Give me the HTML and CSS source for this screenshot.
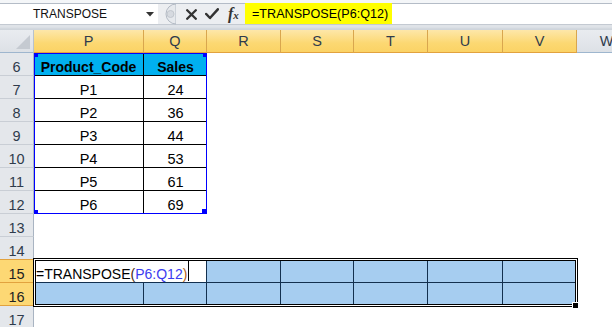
FILE: index.html
```html
<!DOCTYPE html>
<html>
<head>
<meta charset="utf-8">
<link rel="stylesheet" href="styles.css">
</head>
<body>
<div class="app">
  <div class="fbar">
    <div class="namebox">
      <span class="nbtext">TRANSPOSE</span>
      <svg class="drop" width="8" height="5" viewBox="0 0 8 5"><polygon points="0,0 8,0 4,4.5" fill="#333"/></svg>
    </div>
    <div class="ctrls">
      <svg class="grip" width="17" height="22" viewBox="0 0 17 22"><path d="M17 1 A10 10 0 0 0 17 21 Z" fill="#e6e9ed" stroke="#b3bac4"/><circle cx="11.5" cy="11" r="3.5" fill="#d6dae0" stroke="#c2c7ce"/></svg>
      <svg class="ico x" width="11" height="11" viewBox="0 0 11 11"><path d="M1.2 1.2 L9.8 9.8 M9.8 1.2 L1.2 9.8" stroke="#333" stroke-width="2.3" stroke-linecap="round"/></svg>
      <svg class="ico ok" width="14" height="12" viewBox="0 0 14 12"><path d="M1.2 6 L5 10 L12.8 1.3" stroke="#333" stroke-width="2.5" fill="none" stroke-linecap="round" stroke-linejoin="round"/></svg>
      <span class="fx"><i>f</i><span class="fxx">x</span></span>
    </div>
    <div class="finput"><span class="fhl">=TRANSPOSE(P6:Q12)</span></div>
  </div>

  <div class="sheet">
    <div class="corner"><svg width="14" height="14" viewBox="0 0 14 14"><polygon points="14,0 14,14 0,14" fill="#c5cad1"/></svg></div>
    <div class="ch hl">P</div>
    <div class="ch hl">Q</div>
    <div class="ch hl">R</div>
    <div class="ch hl">S</div>
    <div class="ch hl">T</div>
    <div class="ch hl">U</div>
    <div class="ch hl">V</div>
    <div class="ch">W</div>

    <div class="rh">6</div>
    <div class="c th l">Product_Code</div>
    <div class="c th">Sales</div>
    <div class="c"></div><div class="c"></div><div class="c"></div><div class="c"></div><div class="c"></div><div class="c"></div>

    <div class="rh">7</div>
    <div class="c tb l">P1</div><div class="c tb">24</div>
    <div class="c"></div><div class="c"></div><div class="c"></div><div class="c"></div><div class="c"></div><div class="c"></div>

    <div class="rh">8</div>
    <div class="c tb l">P2</div><div class="c tb">36</div>
    <div class="c"></div><div class="c"></div><div class="c"></div><div class="c"></div><div class="c"></div><div class="c"></div>

    <div class="rh">9</div>
    <div class="c tb l">P3</div><div class="c tb">44</div>
    <div class="c"></div><div class="c"></div><div class="c"></div><div class="c"></div><div class="c"></div><div class="c"></div>

    <div class="rh">10</div>
    <div class="c tb l">P4</div><div class="c tb">53</div>
    <div class="c"></div><div class="c"></div><div class="c"></div><div class="c"></div><div class="c"></div><div class="c"></div>

    <div class="rh">11</div>
    <div class="c tb l">P5</div><div class="c tb">61</div>
    <div class="c"></div><div class="c"></div><div class="c"></div><div class="c"></div><div class="c"></div><div class="c"></div>

    <div class="rh">12</div>
    <div class="c tb l">P6</div><div class="c tb">69</div>
    <div class="c"></div><div class="c"></div><div class="c"></div><div class="c"></div><div class="c"></div><div class="c"></div>

    <div class="rh">13</div>
    <div class="c"></div><div class="c"></div><div class="c"></div><div class="c"></div><div class="c"></div><div class="c"></div><div class="c"></div><div class="c"></div>

    <div class="rh">14</div>
    <div class="c"></div><div class="c"></div><div class="c"></div><div class="c"></div><div class="c"></div><div class="c"></div><div class="c"></div><div class="c"></div>

    <div class="rh hl">15</div>
    <div class="c edit"><span>=TRANSPOSE</span><span class="p1">(</span><span class="ref">P6:Q12</span><span class="p2">)</span><span class="caret"></span></div>
    <div class="c sel"></div><div class="c sel"></div><div class="c sel"></div><div class="c sel"></div><div class="c sel"></div>
    <div class="c"></div>

    <div class="rh hl">16</div>
    <div class="c sel"></div><div class="c sel"></div><div class="c sel"></div><div class="c sel"></div><div class="c sel"></div><div class="c sel"></div><div class="c sel"></div>
    <div class="c"></div>

    <div class="rh">17</div>
    <div class="c"></div><div class="c"></div><div class="c"></div><div class="c"></div><div class="c"></div><div class="c"></div><div class="c"></div><div class="c"></div>

    <div class="range"></div>
    <div class="rsq tl"></div>
    <div class="rsq tr"></div>
    <div class="rsq bl"></div>
    <div class="rsq br"></div>
    <div class="selbox"></div>
    <div class="handle"></div>
  </div>
</div>
</body>
</html>
```

FILE: styles.css
```css
* { box-sizing: border-box; }
html, body { margin: 0; padding: 0; }
body {
  width: 612px;
  height: 327px;
  overflow: hidden;
  background: #fff;
  font-family: "Liberation Sans", Arial, sans-serif;
}
.app { width: 612px; height: 327px; overflow: hidden; }

/* formula bar */
.fbar {
  height: 30px;
  display: flex;
  padding: 3px 0 5px 0;
  background: linear-gradient(#f4f6f8 0, #f4f6f8 3px, #dfe3e8 3px, #dfe3e8 27px, #cfd5dc 29px);
}
.namebox {
  width: 158px;
  background: #fff;
  border-top: 1px solid #b4bcc7;
  border-bottom: 1px solid #c4cad2;
  display: flex;
  align-items: center;
  font-size: 12px;
  color: #111;
}
.nbtext { margin-left: 33px; flex: 1; }
.drop { margin-right: 4px; }
.ctrls {
  width: 87px;
  background: #eceef1;
  border-top: 1px solid #b4bcc7;
  border-bottom: 1px solid #c4cad2;
  display: flex;
  align-items: center;
}
.grip { margin-left: 1px; margin-top: -1px; }
.ico.x { margin-left: 10px; }
.ico.ok { margin-left: 8px; }
.fx {
  margin-left: 9px;
  font-family: "Liberation Serif", "Times New Roman", serif;
  color: #333;
  font-size: 16px;
  line-height: 1;
}
.fx i { font-weight: bold; }
.fxx { font-size: 11px; font-style: italic; font-weight: bold; }
.finput {
  flex: 1;
  background: #fff;
  border-top: 1px solid #b4bcc7;
  border-bottom: 1px solid #c4cad2;
  display: flex;
  align-items: stretch;
}
.fhl {
  background: #ffff00;
  width: 147px;
  padding-left: 7px;
  font-size: 12.6px;
  color: #000;
  display: flex;
  align-items: center;
  margin-top: -1px;
}

/* sheet grid */
.sheet {
  position: relative;
  display: grid;
  grid-template-columns: 34px 110px 63px 74px 73px 74px 75px 74px 60px;
  grid-template-rows: 23px repeat(12, 23px);
  font-size: 14px;
  color: #000;
}
.corner {
  background: linear-gradient(#e9ecf0, #dde1e6);
  border-right: 1px solid #b8c2cd;
  border-bottom: 1px solid #9eb6ce;
  display: flex;
  align-items: flex-end;
  justify-content: flex-end;
  padding: 0 3px 3px 0;
}
.ch {
  background: linear-gradient(#e9ecf0, #dde1e6);
  border-right: 1px solid #b8c2cd;
  border-bottom: 1px solid #9eb6ce;
  color: #2f3b4c;
  text-align: center;
  line-height: 22px;
  font-size: 14.5px;
}
.ch.hl {
  background: linear-gradient(#fde7a9, #fcd872 60%, #fbd365);
  border-right: 1px solid #d9a64e;
  border-bottom: 1px solid #e2a23e;
}
.rh {
  background: #e4e7eb;
  border-right: 1px solid #a9b4c2;
  border-bottom: 1px solid #c9ced5;
  color: #2f3b4c;
  display: flex;
  align-items: flex-end;
  justify-content: center;
  line-height: 16px;
  font-size: 14.5px;
}
.rh.hl {
  background: #fdd874;
  border-right: 1px solid #e2a23e;
  border-bottom: 1px solid #e2a23e;
  box-shadow: 0 -1px 0 #e2a23e;
  color: #222;
}
.c {
  display: flex;
  align-items: flex-end;
  justify-content: center;
  line-height: 16px;
  white-space: nowrap;
}
.th {
  background: #00b0f0;
  font-weight: bold;
  border-bottom: 1px solid #000;
}
.tb { border-bottom: 1px solid #000; font-size: 14.5px; }
.th.l, .tb.l { border-right: 1px solid #000; }

.edit {
  grid-column: span 2;
  justify-content: flex-start;
  padding-left: 2px;
  border-right: 1px solid #13304f;
  border-bottom: 1px solid #13304f;
  position: relative;
}
.edit .p1 { color: #4a2a10; }
.edit .ref { color: #3c3cf0; }
.edit .p2 { color: #b0601a; }
.caret {
  width: 1px;
  height: 20px;
  background: #000;
  margin-left: 1px;
  align-self: flex-end;
  margin-bottom: 1px;
}
.sel {
  background: #a6cdf0;
  border-right: 1px solid #13304f;
  border-bottom: 1px solid #13304f;
}

/* overlays */
.range {
  position: absolute;
  left: 34px;
  top: 23px;
  width: 173px;
  height: 161px;
  border: 1px solid #0000ff;
}
.rsq {
  position: absolute;
  width: 4px;
  height: 4px;
  background: #0000ff;
}
.rsq.tl { left: 34px; top: 23px; }
.rsq.tr { left: 203px; top: 23px; }
.rsq.bl { left: 34px; top: 180px; }
.rsq.br { left: 202px; top: 179px; width: 5px; height: 5px; }
.selbox {
  position: absolute;
  left: 33px;
  top: 228px;
  width: 545px;
  height: 49px;
  border: 1px solid #000;
  box-shadow: inset 0 0 0 1px #fff, inset 0 0 0 2px #000;
}
.handle {
  position: absolute;
  left: 572px;
  top: 272px;
  width: 7px;
  height: 7px;
  background: #000;
  border: 1px solid #fff;
}
```
